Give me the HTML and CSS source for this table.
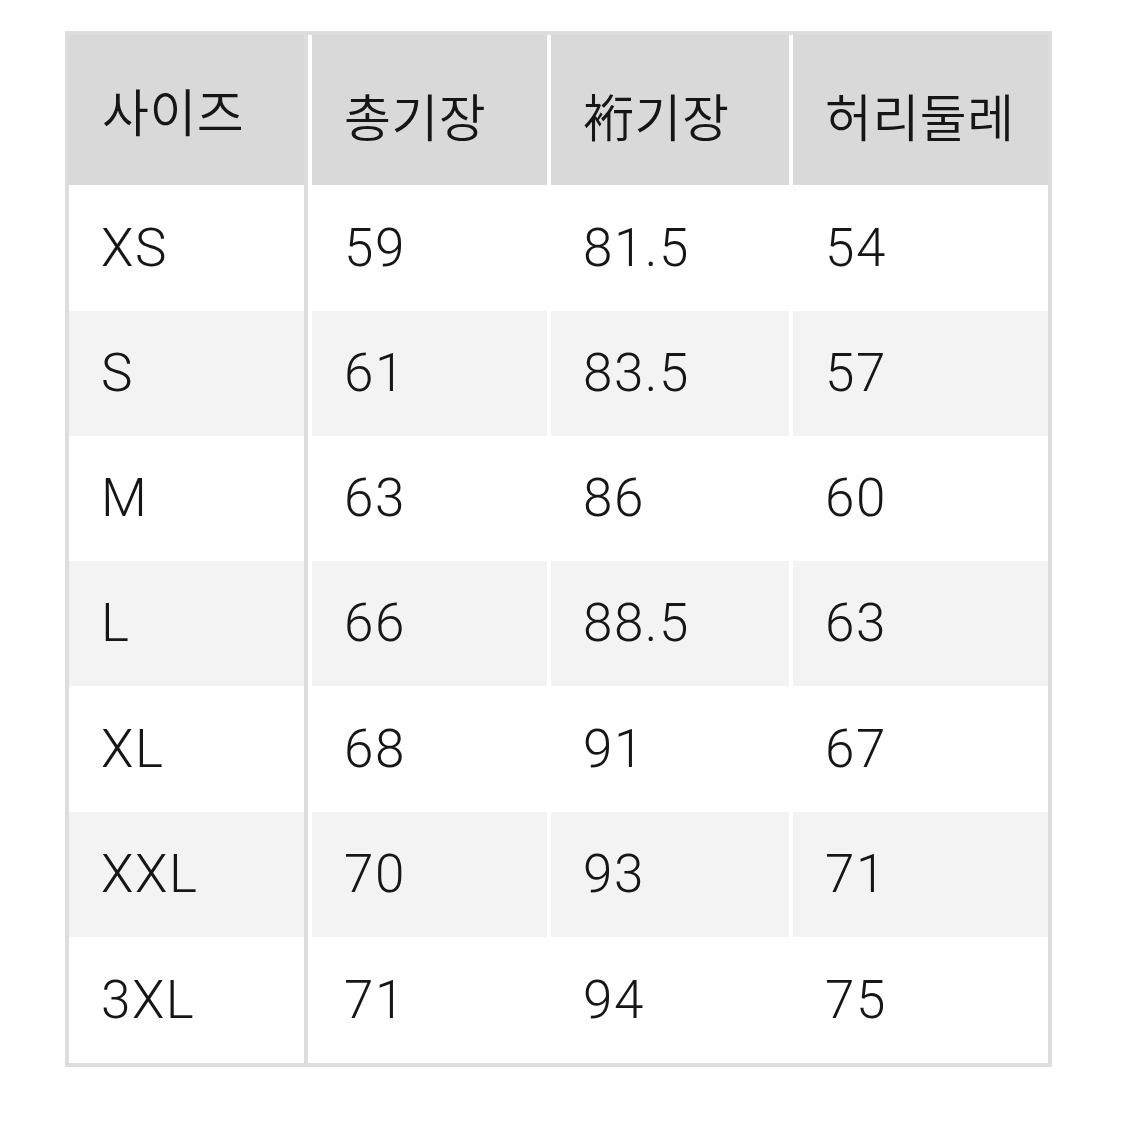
FILE: index.html
```html
<!DOCTYPE html>
<html lang="ko">
<head>
<meta charset="utf-8">
<title>사이즈</title>
<link rel="stylesheet" href="styles.css">
</head>
<body>
<div class="chart">
  <div class="row head">
    <div class="cell first">사이즈</div>
    <div class="cell">총기장</div>
    <div class="cell">裄기장</div>
    <div class="cell">허리둘레</div>
  </div>
  <div class="row r1">
    <div class="cell first">XS</div><div class="cell">59</div><div class="cell">81.5</div><div class="cell">54</div>
  </div>
  <div class="row r2 alt">
    <div class="cell first">S</div><div class="cell">61</div><div class="cell">83.5</div><div class="cell">57</div>
  </div>
  <div class="row r3">
    <div class="cell first">M</div><div class="cell">63</div><div class="cell">86</div><div class="cell">60</div>
  </div>
  <div class="row r4 alt">
    <div class="cell first">L</div><div class="cell">66</div><div class="cell">88.5</div><div class="cell">63</div>
  </div>
  <div class="row r5">
    <div class="cell first">XL</div><div class="cell">68</div><div class="cell">91</div><div class="cell">67</div>
  </div>
  <div class="row r6 alt">
    <div class="cell first">XXL</div><div class="cell">70</div><div class="cell">93</div><div class="cell">71</div>
  </div>
  <div class="row r7">
    <div class="cell first">3XL</div><div class="cell">71</div><div class="cell">94</div><div class="cell">75</div>
  </div>
</div>
</body>
</html>
```

FILE: styles.css
```css
html, body {
  margin: 0;
  padding: 0;
  background: #ffffff;
}

body {
  padding: 31px 0 0 65px;
  font-family: "Roboto", "Liberation Sans", "Noto Sans CJK KR", sans-serif;
  color: #161616;
}

.chart {
  width: 979px;
  border: 4px solid #dddddd;
  background: #ffffff;
}

.row {
  display: grid;
  grid-template-columns: 239px 235px 238px 255px;
  column-gap: 4px;
  height: 125px;
}

.row.r1, .row.r5, .row.r7 {
  height: 126px;
}

.row.head {
  height: 150px;
}

.cell {
  display: flex;
  align-items: center;
  padding-left: 32px;
  font-size: 53px;
  font-weight: 300;
  letter-spacing: 1.5px;
  line-height: 1;
}

.head .cell {
  background: #d9d9d9;
  font-family: "Noto Sans CJK KR", sans-serif;
  font-weight: 350;
  font-size: 51px;
  letter-spacing: 0.5px;
  padding-top: 10px;
  padding-left: 32px;
}

.head .cell.first {
  padding-top: 0;
  padding-left: 33px;
}

.alt .cell {
  background: #f3f3f3;
}

.cell.first {
  border-right: 4px solid #dddddd;
  padding-left: 32px;
}
```
